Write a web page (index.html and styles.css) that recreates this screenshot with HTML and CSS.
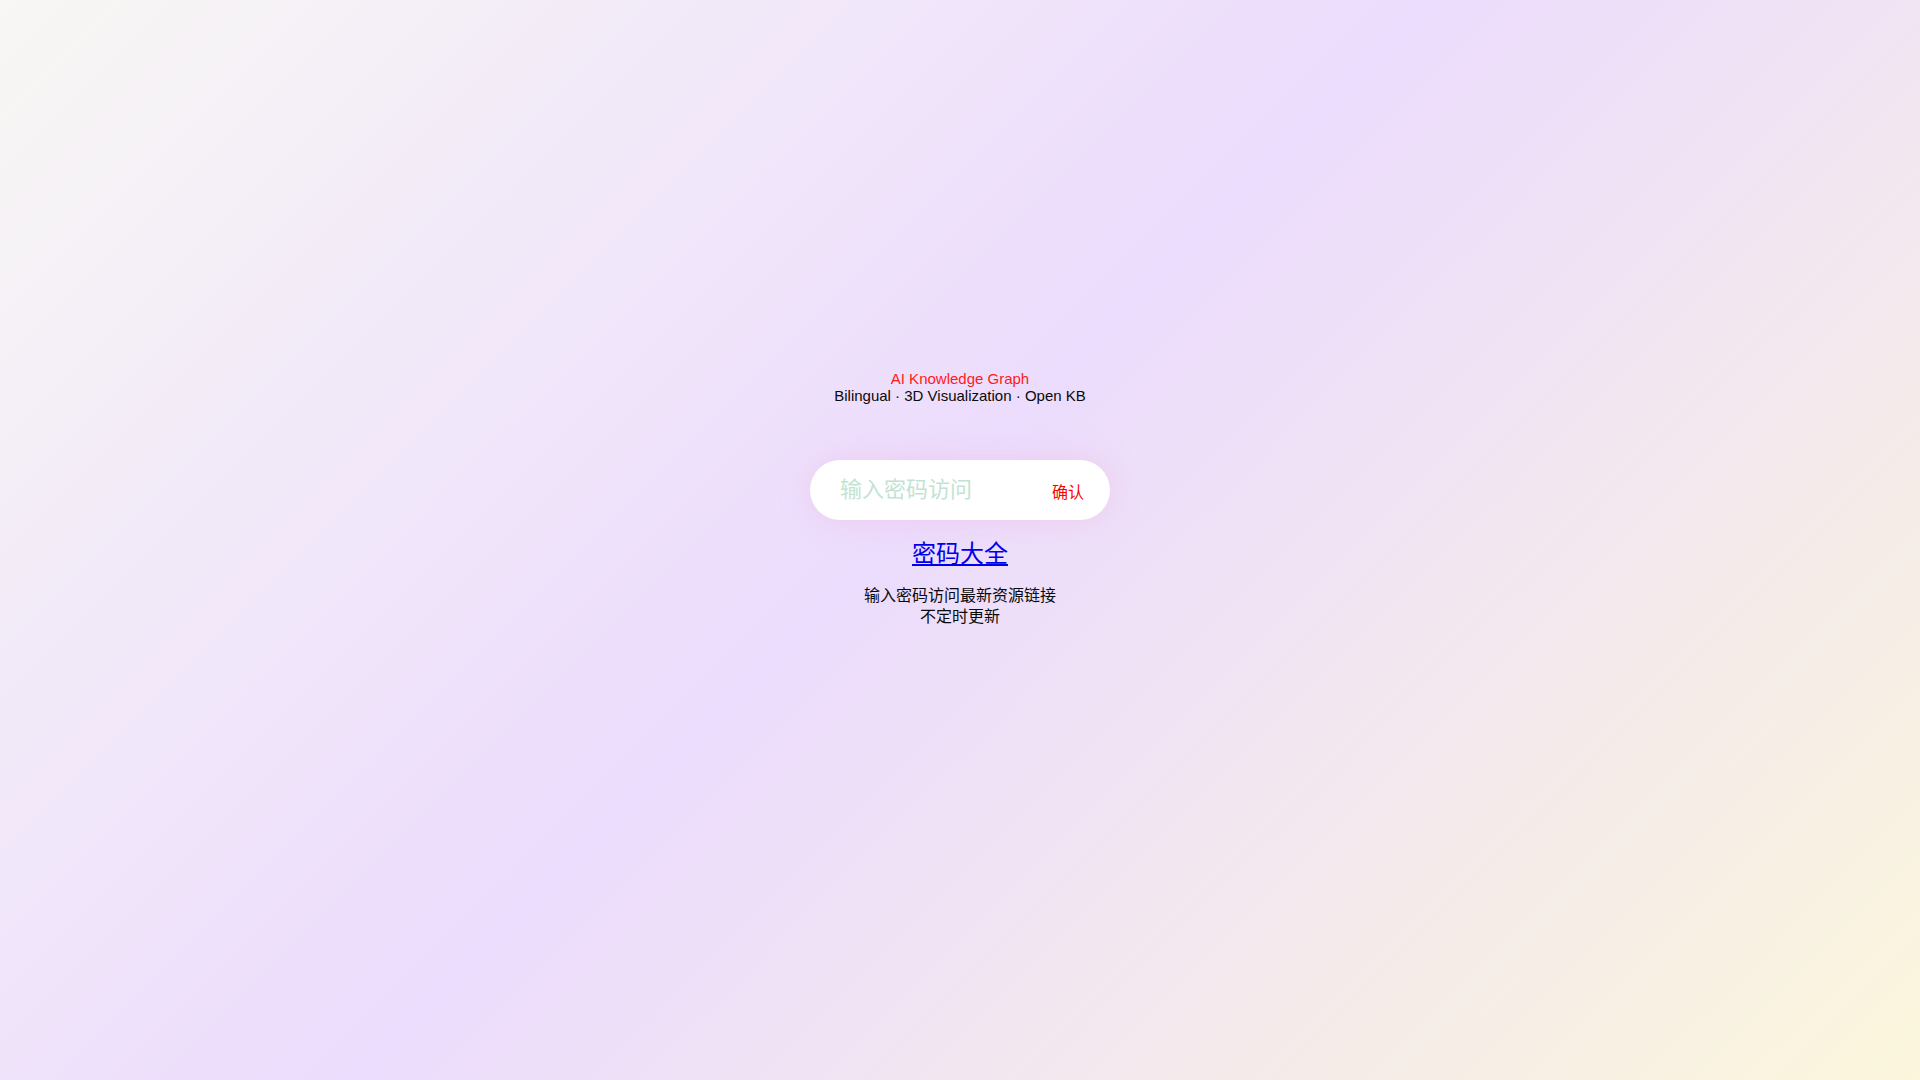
FILE: index.html
```html
<!DOCTYPE html>
<html lang="zh-CN">
<head>
<meta charset="utf-8">
<title>AI Knowledge Graph</title>
<link rel="stylesheet" href="styles.css">
</head>
<body>
<main class="wrap">
  <div class="heading">
    <div class="title">AI Knowledge Graph</div>
    <div class="subtitle">Bilingual · 3D Visualization · Open KB</div>
  </div>
  <form class="pass-box" onsubmit="return false;">
    <input class="pass-input" type="password" placeholder="输入密码访问">
    <button class="pass-btn" type="submit">确认</button>
  </form>
  <a class="all-link" href="#">密码大全</a>
  <p class="note">输入密码访问最新资源链接<br>不定时更新</p>
</main>
</body>
</html>
```
FILE: styles.css
```css
html, body {
  margin: 0;
  padding: 0;
  height: 100%;
}
body {
  font-family: "Liberation Sans", "Noto Sans CJK SC", sans-serif;
  background: linear-gradient(135deg, #f8f7f4 0%, #ecdcfd 48%, #fbf6dc 100%);
  color: #111;
  min-height: 100vh;
}
.wrap {
  display: flex;
  flex-direction: column;
  align-items: center;
  padding-top: 370px;
  text-align: center;
}
.heading {
  font-size: 15px;
  line-height: 17px;
}
.title {
  color: #ff1a1a;
}
.subtitle {
  color: #0a0a0a;
}
.pass-box {
  margin: 56px 0 0;
  width: 300px;
  height: 60px;
  box-sizing: border-box;
  background: #fff;
  border-radius: 30px;
  box-shadow: 0 0 30px rgba(240, 170, 215, 0.35);
  display: flex;
  align-items: center;
  padding: 0 26px 0 30px;
}
.pass-input {
  flex: 1;
  min-width: 0;
  border: none;
  outline: none;
  background: transparent;
  font-family: "Liberation Sans", "Noto Sans CJK SC", sans-serif;
  font-size: 22px;
  padding: 0;
  height: 30px;
  color: #333;
}
.pass-input::placeholder {
  color: #c2e3d3;
}
.pass-btn {
  border: none;
  background: transparent;
  padding: 0;
  margin: 2px 0 0;
  font-family: "Liberation Sans", "Noto Sans CJK SC", sans-serif;
  font-size: 16px;
  color: #f00;
  cursor: pointer;
}
.all-link {
  margin-top: 19px;
  font-size: 24px;
  line-height: 30px;
  color: #0000ee;
}
.note {
  margin: 16px 0 0;
  font-size: 16px;
  line-height: 21px;
  color: #0a0a0a;
}
```
